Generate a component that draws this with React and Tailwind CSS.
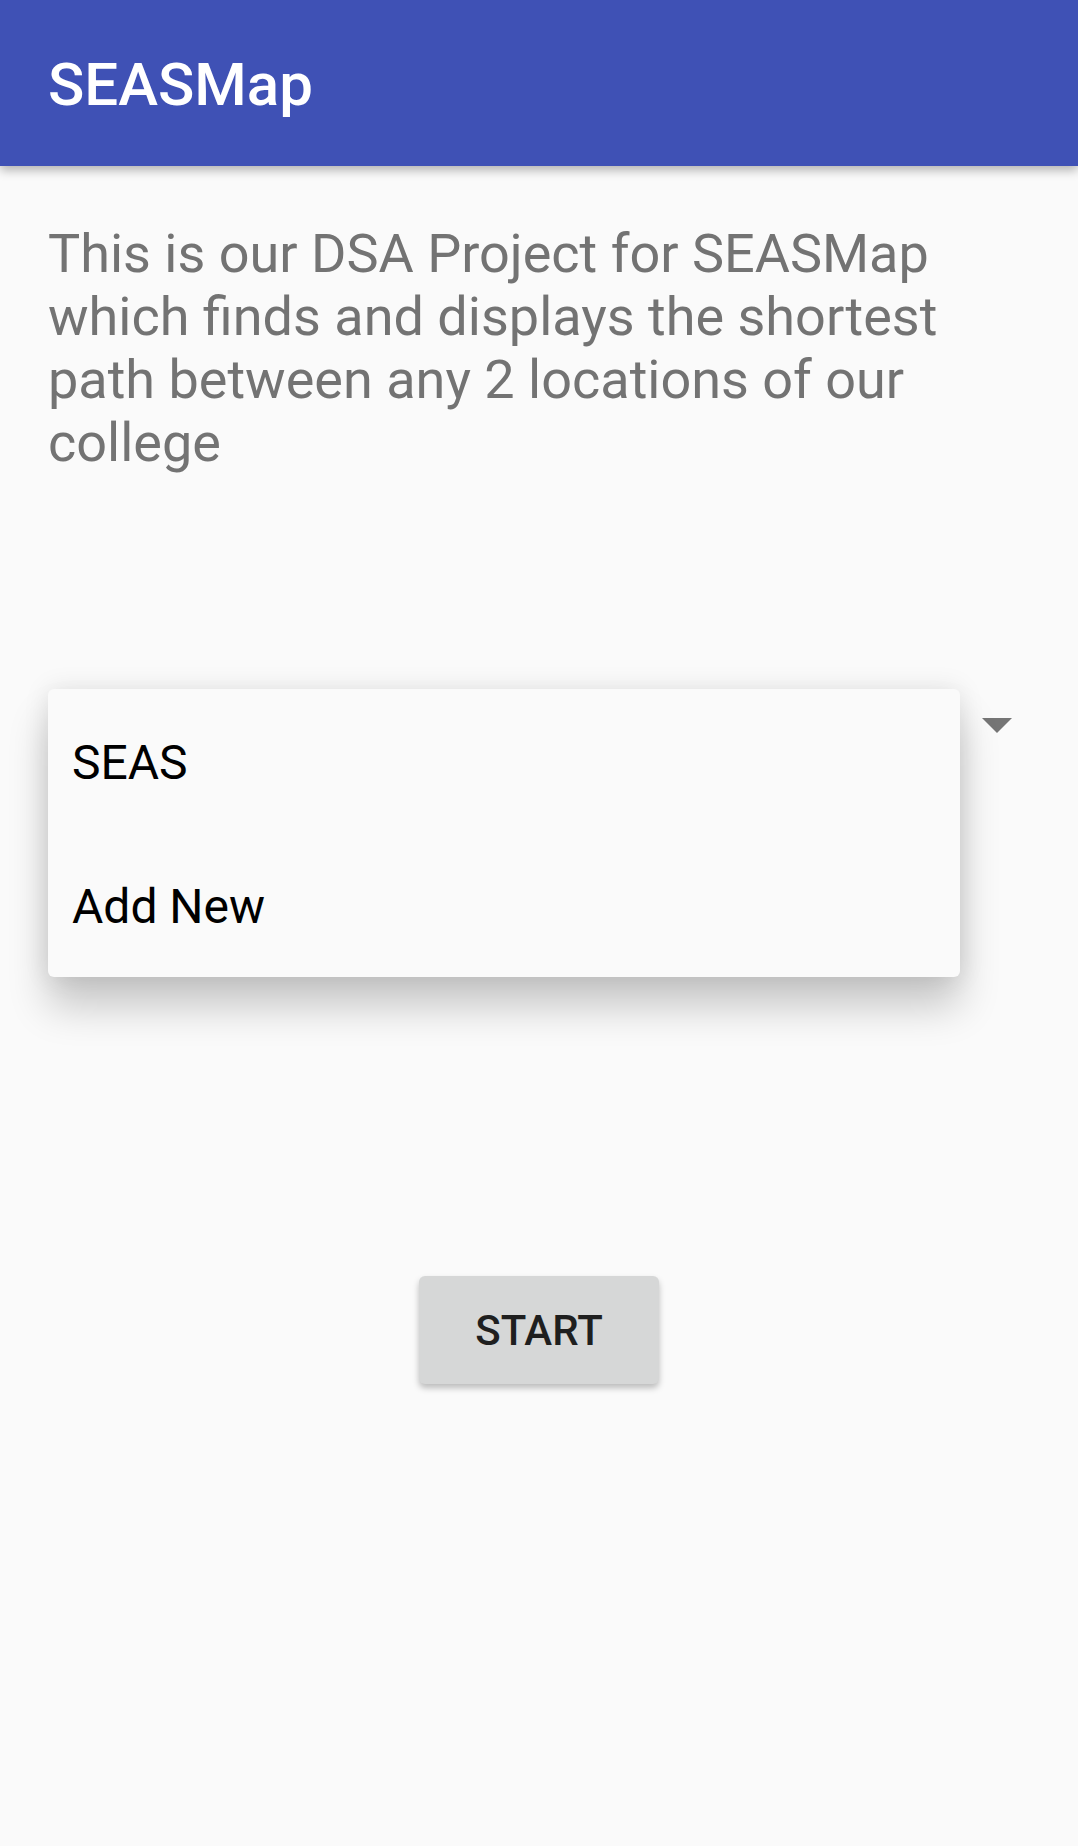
export default function App() {
  const items = ["SEAS", "Add New"];

  return (
    <div className="min-h-[1846px] bg-[#fafafa] font-['Roboto','Liberation_Sans',sans-serif]">
      <header className="relative z-10 h-[166px] bg-[#3f51b5] pl-[48px] pt-[4px] flex items-center shadow-[0_4px_10px_rgba(0,0,0,0.3)]">
        <h1 className="text-[60px] font-medium text-white">SEASMap</h1>
      </header>

      <p className="px-[48px] pt-[56px] text-[54px] leading-[63px] text-[#737373]">
        This is our DSA Project for SEASMap which finds and displays the shortest path between any 2 locations of our college
      </p>

      <div className="relative mt-[215px] h-[74px] flex justify-end items-start pt-[29px] pr-[66px]">
        <svg width="30" height="15" viewBox="0 0 30 15">
          <polygon points="0,0 30,0 15,15" fill="#757575" />
        </svg>

        <div className="absolute left-[48px] top-0 w-[912px] rounded-[6px] bg-[#fafafa] shadow-[0_30px_40px_rgba(0,0,0,0.2),0_0_26px_rgba(0,0,0,0.1)]">
          {items.map((item) => (
            <div key={item} className="h-[144px] flex items-center pl-[24px] pt-[4px] text-[48px] text-black">
              {item}
            </div>
          ))}
        </div>
      </div>

      <div className="mt-[513px] flex justify-center">
        <button className="w-[240px] h-[108px] rounded-[6px] bg-[#d6d7d7] text-[42px] font-medium text-[#1f1f1f] shadow-[0_4px_6px_rgba(0,0,0,0.25)]">
          START
        </button>
      </div>
    </div>
  );
}
